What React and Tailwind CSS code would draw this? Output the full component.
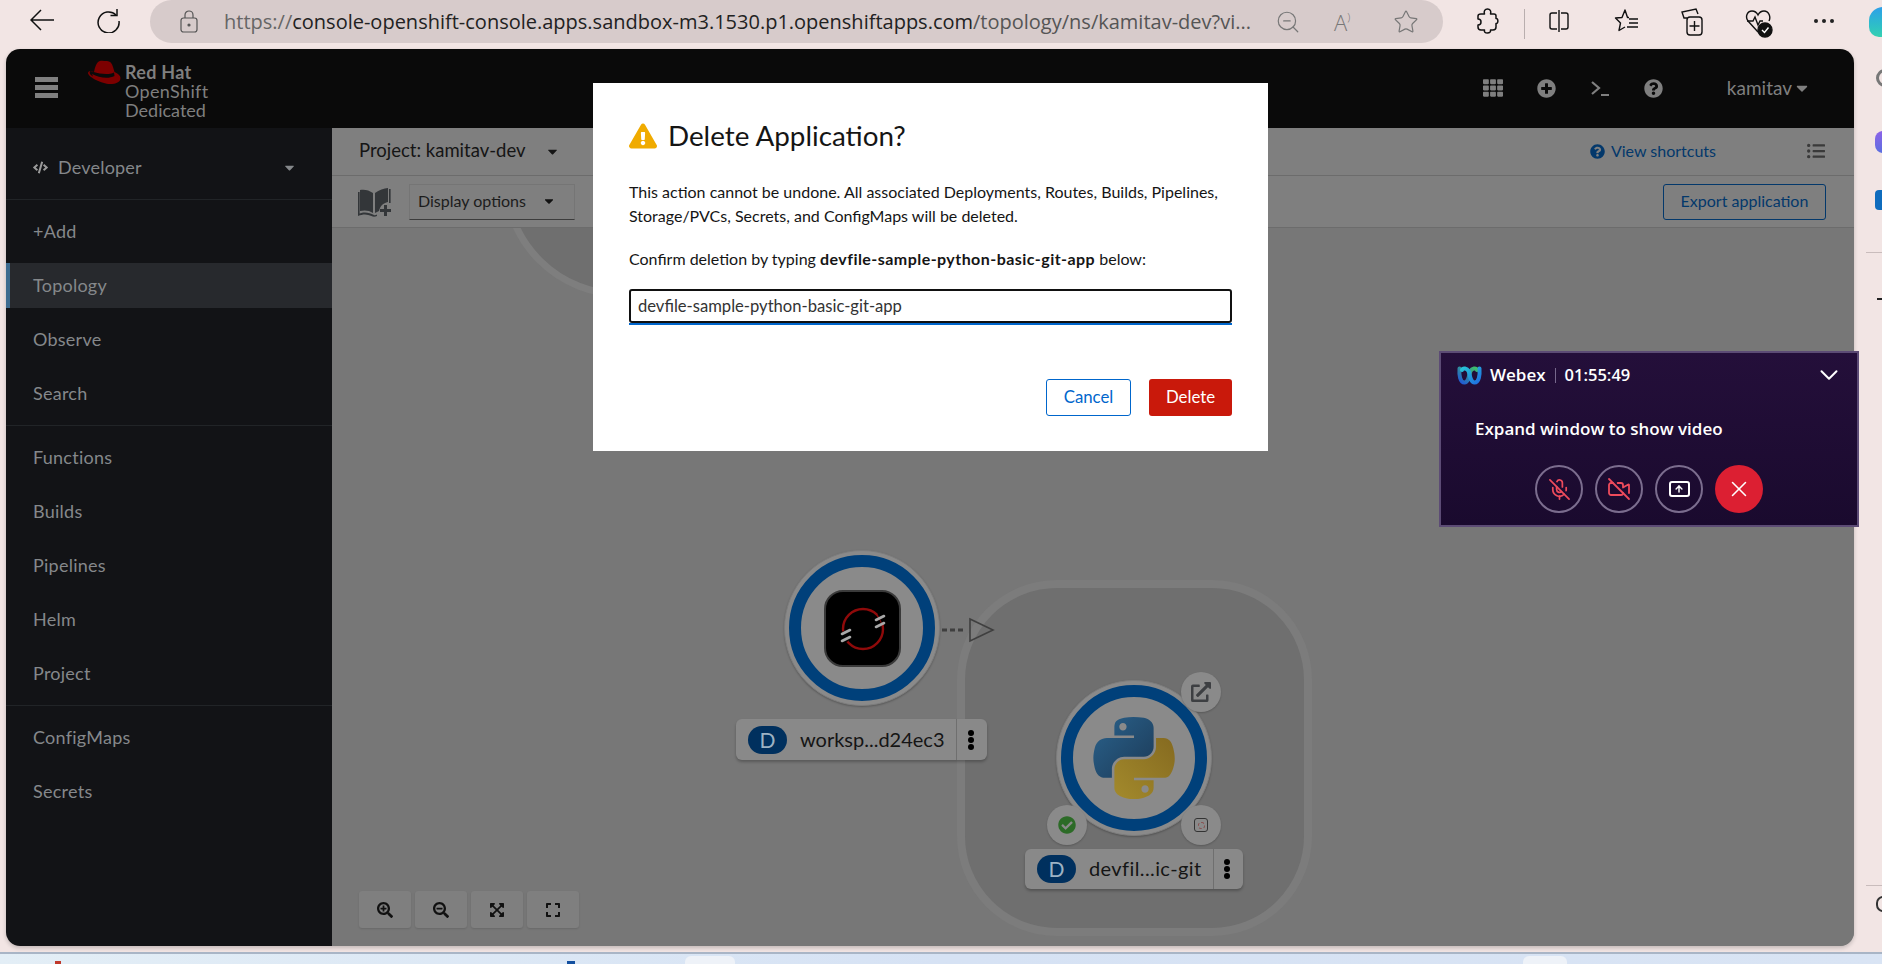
import React from 'react';
import {
  FaTh, FaPlusCircle, FaQuestionCircle, FaCaretDown, FaCode, FaListUl,
  FaExclamationTriangle, FaCheckCircle, FaExternalLinkAlt, FaSearchPlus,
  FaSearchMinus, FaExpandArrowsAlt, FaExpand,
} from 'react-icons/fa';
import { ZoomOut, Star, X, ChevronDown, MicOff, VideoOff, ArrowUp } from 'lucide-react';

const navGroups = [
  ['+Add', 'Topology', 'Observe', 'Search'],
  ['Functions', 'Builds', 'Pipelines', 'Helm', 'Project'],
  ['ConfigMaps', 'Secrets'],
];

const RedHatLogo = () => (
  <svg width="34" height="26" viewBox="0 0 34 26">
    <path d="M11 2 C13 0 17 1 20 1 C23 1 25 3 26 7 L27.5 12 C31 13.5 33.5 15.5 33.5 18 C33.5 22 29 24 23 24 C15 24 1 17 1 13 C1 12 2 11 3 11 L7 12 C8 7 9 4 11 2 Z" fill="#7c0000" />
    <path d="M3 11 C2 13 3 15 6 16.5 L5 14 C12 18 22 19 27.5 16 L27 12.5 C22 15 13 14 6.6 12 Z" fill="#0a0a0a" />
  </svg>
);

const BookPlus = () => (
  <svg width="34" height="30" viewBox="0 0 34 30" fill="#333639">
    <path d="M2 3 C6 2 11 3 15 6 L15 26 C11 23 6 23 2 24 Z" />
    <path d="M17 6 C21 3 26 1.5 30 1 L30 15 C25 16 22 19 21 24 L17 26 Z" />
    <rect x="0" y="5" width="1.6" height="22" />
    <rect x="31" y="2" width="1.6" height="14" />
    <path d="M0 27 C5 24.5 11 25 16 28 C17 28.5 18 28 19 27.5 L19 29 C17 30 15 30 13.5 29 C9 27 5 27 0 29 Z" />
    <rect x="26" y="18" width="3" height="11" />
    <rect x="22" y="22" width="11" height="3" />
  </svg>
);

const PythonLogo = () => (
  <svg width="82" height="82" viewBox="0 0 111 112">
    <defs>
      <linearGradient id="pyBlue" x1="0" y1="0" x2="1" y2="1">
        <stop offset="0" stopColor="#2a628c" />
        <stop offset="1" stopColor="#1c3a57" />
      </linearGradient>
      <linearGradient id="pyYellow" x1="0" y1="1" x2="1" y2="0">
        <stop offset="0" stopColor="#a38a2c" />
        <stop offset="1" stopColor="#856a20" />
      </linearGradient>
    </defs>
    <path fill="url(#pyBlue)" d="M54.9 0C50.3 0 46 .4 42.1 1.1 30.8 3.1 28.7 7.3 28.7 15v10.2h26.8v3.4H18.6C10.8 28.7 4 33.3 1.9 42.3c-2.5 10.2-2.6 16.5 0 27.2 1.9 7.9 6.4 13.6 14.2 13.6h9.2V70.8c0-8.8 7.7-16.6 16.8-16.6h26.8c7.4 0 13.4-6.1 13.4-13.6V15c0-7.3-6.1-12.7-13.4-13.9C64.3.3 59.5 0 54.9 0zM40.4 8.2c2.8 0 5 2.3 5 5.1 0 2.8-2.3 5.1-5 5.1-2.8 0-5-2.3-5-5.1 0-2.8 2.3-5.1 5-5.1z" />
    <path fill="url(#pyYellow)" d="M85.6 28.7v11.9c0 9.2-7.8 17-16.7 17H42.1c-7.3 0-13.4 6.3-13.4 13.6v25.5c0 7.3 6.3 11.5 13.4 13.6 8.5 2.5 16.6 3 26.8 0 6.7-2 13.4-5.9 13.4-13.6V86.5H55.5v-3.4h40.2c7.8 0 10.7-5.4 13.4-13.6 2.8-8.4 2.7-16.5 0-27.2-1.9-7.8-5.6-13.6-13.4-13.6H85.6zM70.6 93.3c2.8 0 5 2.3 5 5.1 0 2.8-2.3 5.1-5 5.1-2.8 0-5-2.3-5-5.1 0-2.8 2.3-5.1 5-5.1z" />
  </svg>
);

const OpenShiftIcon = () => (
  <svg width="77" height="77" viewBox="0 0 77 77">
    <rect x="1" y="1" width="75" height="75" rx="18" fill="#000" stroke="#3a3a3a" strokeWidth="2" />
    <circle cx="39" cy="39" r="20" fill="none" stroke="#8f0a0a" strokeWidth="2.4" />
    <g stroke="#000" strokeWidth="11">
      <line x1="56" y1="29" x2="60" y2="27" />
      <line x1="18" y1="48" x2="22" y2="46" />
    </g>
    <g stroke="#a8a8a8" strokeWidth="2.6" strokeLinecap="round">
      <line x1="52" y1="30" x2="60" y2="26" />
      <line x1="52" y1="37" x2="60" y2="33" />
      <line x1="18" y1="44" x2="26" y2="40" />
      <line x1="18" y1="51" x2="26" y2="47" />
    </g>
  </svg>
);

const WebexLogo = () => (
  <svg width="25" height="20" viewBox="0 0 25 20" fill="none">
    <defs>
      <linearGradient id="wxA" x1="0" y1="0" x2="1" y2="1">
        <stop offset="0" stopColor="#27c2d8" />
        <stop offset="1" stopColor="#1f6fe0" />
      </linearGradient>
      <linearGradient id="wxB" x1="0" y1="1" x2="1" y2="0">
        <stop offset="0" stopColor="#2057d8" />
        <stop offset="1" stopColor="#3fc06a" />
      </linearGradient>
    </defs>
    <path d="M2.5 3.5 C2 10 3 17.5 7.5 17.5 C12 17.5 12 9 13.5 6 C15 3 19 2.5 20 5" stroke="url(#wxB)" strokeWidth="4" strokeLinecap="round" />
    <path d="M22.5 3.5 C23 10 22 17.5 17.5 17.5 C13 17.5 13 9 11.5 6 C10 3 6 2.5 5 5" stroke="url(#wxA)" strokeWidth="4" strokeLinecap="round" />
  </svg>
);

const Ring = ({ children, className }) => (
  <div className={`absolute w-[156px] h-[156px] rounded-full bg-[#8a8a8a] border border-[#7d7d7d] flex items-center justify-center shadow-[0_1px_2px_rgba(0,0,0,0.25)] ${className}`}>
    <div className="w-[146px] h-[146px] rounded-full border-[12px] border-[#00407a] flex items-center justify-center">
      {children}
    </div>
  </div>
);

const NodeLabel = ({ text, className, textWidth }) => (
  <div className={`absolute flex items-center rounded-md bg-[#898989] font-['Lato',sans-serif] shadow-[0_2px_3px_rgba(0,0,0,0.25)] ${className}`}>
    <div className="ml-3 w-[39px] h-[28px] rounded-full bg-[#00305e] text-[#9db3c4] text-[21px] flex items-center justify-center">D</div>
    <div className={`pl-[13px] pb-[2px] text-[20px] text-[#151515] whitespace-nowrap ${textWidth}`}>{text}</div>
    <div className="self-stretch w-px bg-[#6f6f6f]" />
    <div className="flex-1 pr-[3px] flex flex-col items-center justify-center gap-[1px]">
      <span className="w-[6px] h-[6px] rounded-full bg-black" />
      <span className="w-[6px] h-[6px] rounded-full bg-black" />
      <span className="w-[6px] h-[6px] rounded-full bg-black" />
    </div>
  </div>
);

const Decorator = ({ children, className }) => (
  <div className={`absolute w-[40px] h-[40px] rounded-full bg-[#8a8a8a] flex items-center justify-center shadow-[0_1px_2px_rgba(0,0,0,0.2)] ${className}`}>
    {children}
  </div>
);

const ZoomButton = ({ children }) => (
  <div className="w-[52px] h-[37px] rounded-[3px] bg-[#7f7f7f] flex items-center justify-center text-[#111] text-[16px] shadow-[0_1px_2px_rgba(0,0,0,0.12)]">
    {children}
  </div>
);

const BrowserBar = () => (
  <div className="h-[49px] flex items-start pl-[30px] shrink-0 [&>*]:shrink-0">
    <svg className="mt-[9px]" width="24" height="22" viewBox="0 0 24 22" fill="none" stroke="#111" strokeWidth="1.5">
      <path d="M1 11 H24 M11 1 L1 11 L11 21" />
    </svg>
    <svg className="ml-[42px] mt-[8px]" width="25" height="25" viewBox="0 0 25 25" fill="none" stroke="#111" strokeWidth="1.5">
      <path d="M20 7 A10.5 10.5 0 1 0 23 13" />
      <path d="M21 1 V7.5 H14.5" />
    </svg>
    <div className="ml-[29px] w-[1293px] h-[43px] rounded-[22px] bg-[#d7cbcb] flex items-center pl-[30px] pr-[24px]">
      <svg className="shrink-0" width="18" height="23" viewBox="0 0 18 23" fill="none" stroke="#555" strokeWidth="1.2">
        <path d="M5 8 V5 C5 2.5 7 1 9 1 C11 1 13 2.5 13 5 V8" />
        <rect x="1" y="8" width="16" height="14" rx="2.5" />
        <circle cx="9" cy="15" r="1" fill="#555" />
      </svg>
      <div className="ml-[26px] flex-1 text-[20px] whitespace-nowrap font-['Open_Sans',sans-serif] text-[#222]">
        <span className="text-[#666]">https://</span>console-openshift-console.apps.sandbox-m3.1530.p1.openshiftapps.com<span className="text-[#555]">/topology/ns/kamitav-dev?vi...</span>
      </div>
      <ZoomOut size={26} strokeWidth={1.1} className="text-[#777] shrink-0" />
      <div className="ml-[33px] w-[26px] text-[22px] leading-none text-[#777] font-['Open_Sans',sans-serif] font-light">A<span className="text-[11px] align-top">)</span></div>
      <Star size={26} strokeWidth={1.1} className="ml-[33px] text-[#777] shrink-0" />
    </div>
    <svg className="ml-[32px] mt-[8px]" width="24" height="26" viewBox="0 0 24 26" fill="none" stroke="#111" strokeWidth="1.5" strokeLinejoin="round">
      <path d="M6 6 H9.5 C8.5 3 10 1 12.5 1 C15 1 16.5 3 15.5 6 H19 C20.5 6 21 7 21 8 V10.5 C23.5 10 23.5 16 21 15.5 V19 C21 21 20 22 18 22 H15.5 C16 24.5 14 25 12.5 25 C10 25 9 24 9.5 22 H6 C4 22 3 21 3 19 V17 C5.5 17 6 15.5 6 14 C6 12.5 5 11 3 11 V8 C3 7 4 6 6 6 Z" />
    </svg>
    <div className="ml-[25px] mt-[9px] w-px h-[30px] bg-[#b9aeae]" />
    <svg className="ml-[21px] mt-[8px]" width="26" height="26" viewBox="0 0 26 26" fill="none" stroke="#111" strokeWidth="1.4">
      <path d="M11 5 H6 C4.5 5 4 6 4 7 V19 C4 20 4.5 21 6 21 H11 M15 5 H20 C21.5 5 22 6 22 7 V19 C22 20 21.5 21 20 21 H15" />
      <path d="M13 2 V24" />
    </svg>
    <svg className="ml-[42px] mt-[8px]" width="26" height="26" viewBox="0 0 26 26" fill="none" stroke="#111" strokeWidth="1.4" strokeLinejoin="round">
      <path d="M15 9.5 L13.5 9.5 L11 2 L8 9.5 L1.5 10 L6.5 15 L5 22.5 L11 19" />
      <path d="M15 11 H24 M15 15 H24 M13 19 H24" />
    </svg>
    <svg className="ml-[39px] mt-[8px]" width="26" height="30" viewBox="0 0 26 30" fill="none" stroke="#111" strokeWidth="1.4">
      <path d="M8 10 H5 L3 4 L17 1 L19 6" />
      <rect x="8" y="9" width="15" height="18" rx="3" />
      <path d="M15.5 13 V23 M10.5 18 H20.5" />
    </svg>
    <svg className="ml-[40px] mt-[8px]" width="28" height="32" viewBox="0 0 28 32" fill="none" stroke="#111" strokeWidth="1.4">
      <path d="M13 24 L3 13 C0 9 2 3 7 3 C10 3 12 5 13 7 C14 5 16 3 19 3 C24 3 26 9 24 13" />
      <path d="M2 13 H8 L10 9 L13 17 L15 13 H18" />
      <circle cx="20" cy="22" r="7" fill="#111" />
      <path d="M17 22 L19.5 24.5 L23.5 19.5" stroke="#fff" />
    </svg>
    <div className="ml-[41px] mt-[19px] flex gap-[4px]">
      <span className="w-[4px] h-[4px] rounded-full bg-[#222]" />
      <span className="w-[4px] h-[4px] rounded-full bg-[#222]" />
      <span className="w-[4px] h-[4px] rounded-full bg-[#222]" />
    </div>
    <div className="ml-[35px] mt-[7px] w-[30px] h-[30px] rounded-t-[14px] rounded-bl-[10px] bg-gradient-to-b from-[#2f9fe8] to-[#35d0b0]" />
  </div>
);

const RightStrip = () => (
  <div className="w-[28px] shrink-0 flex flex-col overflow-hidden">
    <div className="ml-[22px] mt-[20px] w-[18px] h-[18px] rounded-full border-[3px] border-[#777] shrink-0" />
    <div className="ml-[21px] mt-[44px] w-[18px] h-[22px] rounded-l-[8px] bg-gradient-to-b from-[#8c62e8] to-[#5a6fe0] shrink-0" />
    <div className="ml-[21px] mt-[37px] w-[18px] h-[20px] rounded-l-[4px] bg-[#0f6cbd] shrink-0" />
    <div className="ml-[12px] mt-[42px] h-px bg-[#c9bcbc] shrink-0" />
    <div className="ml-[23px] mt-[45px] h-[2px] bg-[#222] shrink-0" />
    <div className="ml-[12px] mt-[585px] h-px bg-[#c9bcbc] shrink-0" />
    <div className="ml-[22px] mt-[10px] w-[14px] h-[16px] rounded-full border-2 border-[#333] shrink-0" />
  </div>
);

const Sidebar = () => (
  <aside className="w-[326px] shrink-0 bg-[#121316] flex flex-col font-['Lato',sans-serif] text-[#85888b] text-[18px]">
    <div className="h-[72px] border-b border-[#212427] flex items-center pt-[8px] pl-[27px] pr-[35px] shrink-0">
      <FaCode size={15} className="text-[#9a9a9a]" />
      <span className="ml-[10px] flex-1 tracking-[0.2px]">Developer</span>
      <FaCaretDown size={15} className="text-[#85888b]" />
    </div>
    {navGroups.map((group, i) => (
      <div key={i} className={`flex flex-col gap-[9px] pb-[9px] ${i === 0 ? 'pt-[9px]' : 'pt-[9px] border-t border-[#212427]'}`}>
        {group.map((item) => (
          <div
            key={item}
            className={`h-[45px] flex items-center tracking-[0.25px] ${item === 'Topology' ? 'bg-[#27292d] border-l-4 border-[#3d6b8f] pl-[23px]' : 'pl-[27px]'}`}
          >
            {item}
          </div>
        ))}
      </div>
    ))}
  </aside>
);

const Canvas = () => (
  <div className="relative flex-1 bg-[#777777] overflow-hidden font-['Lato',sans-serif]">
    <div className="absolute left-[170px] top-[-200px] w-[500px] h-[270px] rounded-[120px] border-[7px] border-[#7e7e7e] bg-[#6f6f6f]" />
    <div className="absolute left-[625px] top-[352px] w-[355px] h-[356px] rounded-[100px] border-[8px] border-[#7c7c7c] bg-[#6f6f6f]" />

    <Ring className="left-[452px] top-[322px]"><OpenShiftIcon /></Ring>
    <svg className="absolute left-[610px] top-[387px]" width="55" height="30" viewBox="0 0 55 30" fill="none" stroke="#3f3f3f">
      <path d="M0 15 H24" strokeWidth="3" strokeDasharray="5 3" />
      <path d="M28 4 L51 15 L28 26 Z" strokeWidth="1.6" />
    </svg>
    <NodeLabel text="worksp...d24ec3" className="left-[404px] top-[491px] w-[251px] h-[41px]" textWidth="w-[169px]" />

    <Ring className="left-[724px] top-[452px]"><PythonLogo /></Ring>
    <Decorator className="left-[849px] top-[444px]"><FaExternalLinkAlt size={20} className="text-[#3d3f42]" /></Decorator>
    <Decorator className="left-[715px] top-[577px]">
      <span className="w-[18px] h-[18px] rounded-full bg-[#8a8a8a] flex items-center justify-center"><FaCheckCircle size={20} className="text-[#2c6b27]" /></span>
    </Decorator>
    <Decorator className="left-[849px] top-[577px]">
      <span className="w-[14px] h-[14px] rounded-[3px] border border-[#333] flex items-center justify-center">
        <span className="w-[7px] h-[7px] rounded-full border border-dashed border-[#8a4a4a]" />
      </span>
    </Decorator>
    <NodeLabel text="devfil...ic-git" className="left-[693px] top-[621px] w-[218px] h-[40px]" textWidth="w-[137px] tracking-[0.4px]" />

    <div className="absolute left-[27px] bottom-[18px] flex gap-[4px]">
      <ZoomButton><FaSearchPlus /></ZoomButton>
      <ZoomButton><FaSearchMinus /></ZoomButton>
      <ZoomButton><FaExpandArrowsAlt /></ZoomButton>
      <ZoomButton><FaExpand /></ZoomButton>
    </div>
  </div>
);

const AppWindow = () => (
  <div className="ml-[6px] w-[1848px] shrink-0 rounded-t-[14px] rounded-b-[14px] overflow-hidden flex flex-col shadow-[0_2px_4px_rgba(0,0,0,0.2)]">
    <header className="h-[79px] shrink-0 bg-[#0a0a0a] flex items-start font-['Lato',sans-serif] text-[#7f7f7f]">
      <div className="ml-[29px] mt-[28px] w-[23px] flex flex-col gap-[3.5px]">
        <span className="h-[4.5px] bg-[#808080]" />
        <span className="h-[4.5px] bg-[#808080]" />
        <span className="h-[4.5px] bg-[#808080]" />
      </div>
      <div className="ml-[29px] mt-[11px]"><RedHatLogo /></div>
      <div className="ml-[4px] mt-[14px] flex flex-col text-[18px] leading-[19px]">
        <span className="font-bold tracking-[0.3px]">Red Hat</span>
        <span className="tracking-[0.35px]">OpenShift</span>
        <span>Dedicated</span>
      </div>
      <div className="ml-auto mt-[25px] mr-[43px] flex items-center">
        <FaTh size={20} />
        <FaPlusCircle size={19} className="ml-[34px]" />
        <svg className="ml-[34px]" width="20" height="20" viewBox="0 0 20 20" fill="none" stroke="#7f7f7f" strokeWidth="2.2">
          <path d="M2 4 L9 10 L2 16" />
          <path d="M11 17 H19" />
        </svg>
        <FaQuestionCircle size={19} className="ml-[34px]" />
        <span className="ml-[64px] text-[19px]">kamitav</span>
        <FaCaretDown size={18} className="ml-[1px]" />
      </div>
    </header>
    <div className="flex-1 flex min-h-0">
      <Sidebar />
      <main className="flex-1 flex flex-col min-w-0 font-['Lato',sans-serif] bg-[#7f7f7f]">
        <div className="h-[48px] shrink-0 border-b border-[#6c6c6c] flex items-center pb-[1px] pl-[27px] pr-[29px] text-[18.5px] text-[#151515]">
          <span>Project: kamitav-dev</span>
          <FaCaretDown size={15} className="ml-[19px]" />
          <FaQuestionCircle size={15} className="ml-auto text-[#03386b]" />
          <span className="ml-[6px] text-[16px] text-[#03386b]">View shortcuts</span>
          <FaListUl size={18} className="ml-[91px] text-[#3a3a3a]" />
        </div>
        <div className="h-[52px] shrink-0 border-b border-[#6c6c6c] flex items-center pl-[26px] pr-[28px]">
          <BookPlus />
          <div className="ml-[17px] w-[166px] h-[36px] border border-[#757575] border-b-[#3c3c3c] flex items-center pl-[8px] pr-[18px] pb-[2px] text-[16px] text-[#1c1c1c]">
            <span className="flex-1">Display options</span>
            <FaCaretDown size={14} className="text-[#111]" />
          </div>
          <div className="ml-auto w-[163px] h-[36px] rounded-[3px] border border-[#03386b] flex items-center justify-center pb-[2px] text-[16px] text-[#03386b]">
            Export application
          </div>
        </div>
        <Canvas />
      </main>
    </div>
  </div>
);

const DeleteModal = () => (
  <div className="absolute left-[593px] top-[83px] w-[675px] h-[368px] bg-white pl-[36px] pr-[36px] pt-[36px] font-['Lato',sans-serif] text-[#151515]">
    <div className="h-[34px] flex items-center">
      <FaExclamationTriangle size={28} className="text-[#f0ab00]" />
      <h1 className="ml-[11px] text-[27.8px] leading-none">Delete Application?</h1>
    </div>
    <p className="mt-[27px] text-[16px] leading-[23.5px] whitespace-nowrap">
      This action cannot be undone. All associated Deployments, Routes, Builds, Pipelines,<br />
      Storage/PVCs, Secrets, and ConfigMaps will be deleted.
    </p>
    <p className="mt-[20px] text-[16px] leading-[23.5px]">
      Confirm deletion by typing <strong className="tracking-[0.45px]">devfile-sample-python-basic-git-app</strong> below:
    </p>
    <div className="mt-[18px] border-b-2 border-[#0066cc]">
      <input
        readOnly
        value="devfile-sample-python-basic-git-app"
        className="block w-full h-[34px] px-[7px] rounded-[3px] border-[2.5px] border-[#111] text-[16.6px] text-[#333] outline-none"
      />
    </div>
    <div className="mt-[54px] flex justify-end gap-[18px] text-[16.8px]">
      <button className="w-[85px] h-[37px] rounded-[3px] border border-[#0066cc] text-[#0066cc]">Cancel</button>
      <button className="w-[83px] h-[37px] rounded-[3px] bg-[#c9190b] text-white">Delete</button>
    </div>
  </div>
);

const CallButton = ({ children, className }) => (
  <div className={`w-[48px] h-[48px] rounded-full flex items-center justify-center ${className}`}>{children}</div>
);

const WebexWidget = () => (
  <div className="absolute left-[1439px] top-[351px] w-[420px] h-[176px] border-2 border-[#5c4b75] bg-gradient-to-b from-[#240f3a] to-[#1a0a2e] font-['Open_Sans',sans-serif] text-white">
    <div className="flex items-center pl-[16px] pr-[13px] h-[44px]">
      <WebexLogo />
      <span className="ml-[8px] text-[17px] font-semibold">Webex</span>
      <span className="ml-[9px] w-px h-[15px] bg-[#77688c]" />
      <span className="ml-[9px] text-[16.5px] font-semibold">01:55:49</span>
      <ChevronDown size={30} strokeWidth={1.6} className="ml-auto" />
    </div>
    <div className="mt-[20px] pl-[34px] text-[17px] leading-[24px] font-semibold whitespace-nowrap">Expand window to show video</div>
    <div className="mt-[24px] flex justify-center gap-[12px]">
      <CallButton className="border-2 border-[#7b6d8e]"><MicOff size={23} strokeWidth={1.8} className="text-[#ee4b5c]" /></CallButton>
      <CallButton className="border-2 border-[#7b6d8e]"><VideoOff size={24} strokeWidth={1.8} className="text-[#ee4b5c]" /></CallButton>
      <CallButton className="border-2 border-[#7b6d8e]">
        <span className="w-[21px] h-[16px] rounded-[3px] border-2 border-white flex items-center justify-center"><ArrowUp size={10} strokeWidth={3.5} /></span>
      </CallButton>
      <CallButton className="bg-[#dc1f32]"><X size={26} strokeWidth={1.4} className="text-white" /></CallButton>
    </div>
  </div>
);

export default function App() {
  return (
    <div className="relative w-[1882px] h-[964px] overflow-hidden bg-[#f2e5e4] flex flex-col">
      <BrowserBar />
      <div className="h-[897px] shrink-0 flex">
        <AppWindow />
        <RightStrip />
      </div>
      <div className="h-[6px] shrink-0" />
      <div className="h-[2px] shrink-0 bg-[#a9b5c6]" />
      <div className="flex-1 bg-gradient-to-r from-[#e3eef6] via-[#d6e2f4] to-[#d9e4f4] flex items-end overflow-hidden">
        <span className="ml-[55px] w-[6px] h-[3px] bg-[#c0392b]" />
        <span className="ml-[506px] w-[8px] h-[3px] bg-[#1450a0]" />
        <span className="ml-[110px] w-[50px] h-[8px] rounded-t-[6px] bg-[#eef2f8]" />
        <span className="ml-[788px] w-[44px] h-[8px] rounded-t-[6px] bg-[#eef2f8]" />
      </div>
      <DeleteModal />
      <WebexWidget />
    </div>
  );
}
